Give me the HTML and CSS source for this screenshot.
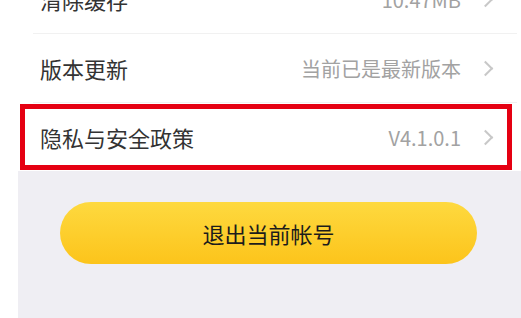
FILE: index.html
```html
<!DOCTYPE html>
<html lang="zh-CN">
<head>
  <meta charset="UTF-8">
  <title>设置</title>
  <link rel="stylesheet" href="styles.css">
</head>
<body>
  <div class="pantalla">
    <div class="lista">
      <div class="fila">
        <span class="etiqueta">清除缓存</span>
        <span class="valor">10.47MB</span>
        <span class="flecha"></span>
      </div>
      <div class="fila">
        <span class="etiqueta">版本更新</span>
        <span class="valor">当前已是最新版本</span>
        <span class="flecha"></span>
      </div>
      <div class="fila marcada">
        <span class="etiqueta">隐私与安全政策</span>
        <span class="valor">V4.1.0.1</span>
        <span class="flecha"></span>
      </div>
    </div>
    <div class="pie">
      <button class="salir">退出当前帐号</button>
    </div>
  </div>
</body>
</html>
```

FILE: styles.css
```css
html, body {
  margin: 0;
  height: 318px;
  overflow: hidden;
}
html {
  background: linear-gradient(to right, #fff 18px, #efeef3 18px);
}
body {
  font-family: "Noto Sans CJK SC", "Noto Sans", sans-serif;
}
.pantalla {
  margin-left: 18px;
  height: 353px;
  margin-top: -35px;
  background: #efeef3;
}
.lista {
  background: #fff;
}
.fila {
  position: relative;
  display: flex;
  align-items: center;
  height: 68px;
  margin: 0 4px 0 15px;
  padding: 0 23px 0 7px;
  border-bottom: 1px solid #f1f1f1;
}
.fila.marcada {
  border-bottom: none;
}
.fila.marcada::after {
  content: "";
  position: absolute;
  left: -13px;
  right: 5px;
  top: 1px;
  bottom: 1px;
  border: 5px solid #e50012;
}
.etiqueta {
  flex: 1;
  font-size: 22px;
  color: #333;
}
.valor {
  font-size: 20px;
  color: #a2a2a2;
}
.flecha {
  width: 9px;
  height: 9px;
  margin-left: 19px;
  margin-right: 3px;
  border-top: 2px solid #c8c8c8;
  border-right: 2px solid #c8c8c8;
  transform: rotate(45deg);
}
.pie {
  padding: 31px 44px 0 42px;
}
.salir {
  display: block;
  width: 100%;
  height: 62px;
  border: none;
  border-radius: 31px;
  background: linear-gradient(#fed93f, #fcc41b);
  font-family: "Noto Sans CJK SC", sans-serif;
  font-size: 22px;
  color: #1c1c1c;
}
```
